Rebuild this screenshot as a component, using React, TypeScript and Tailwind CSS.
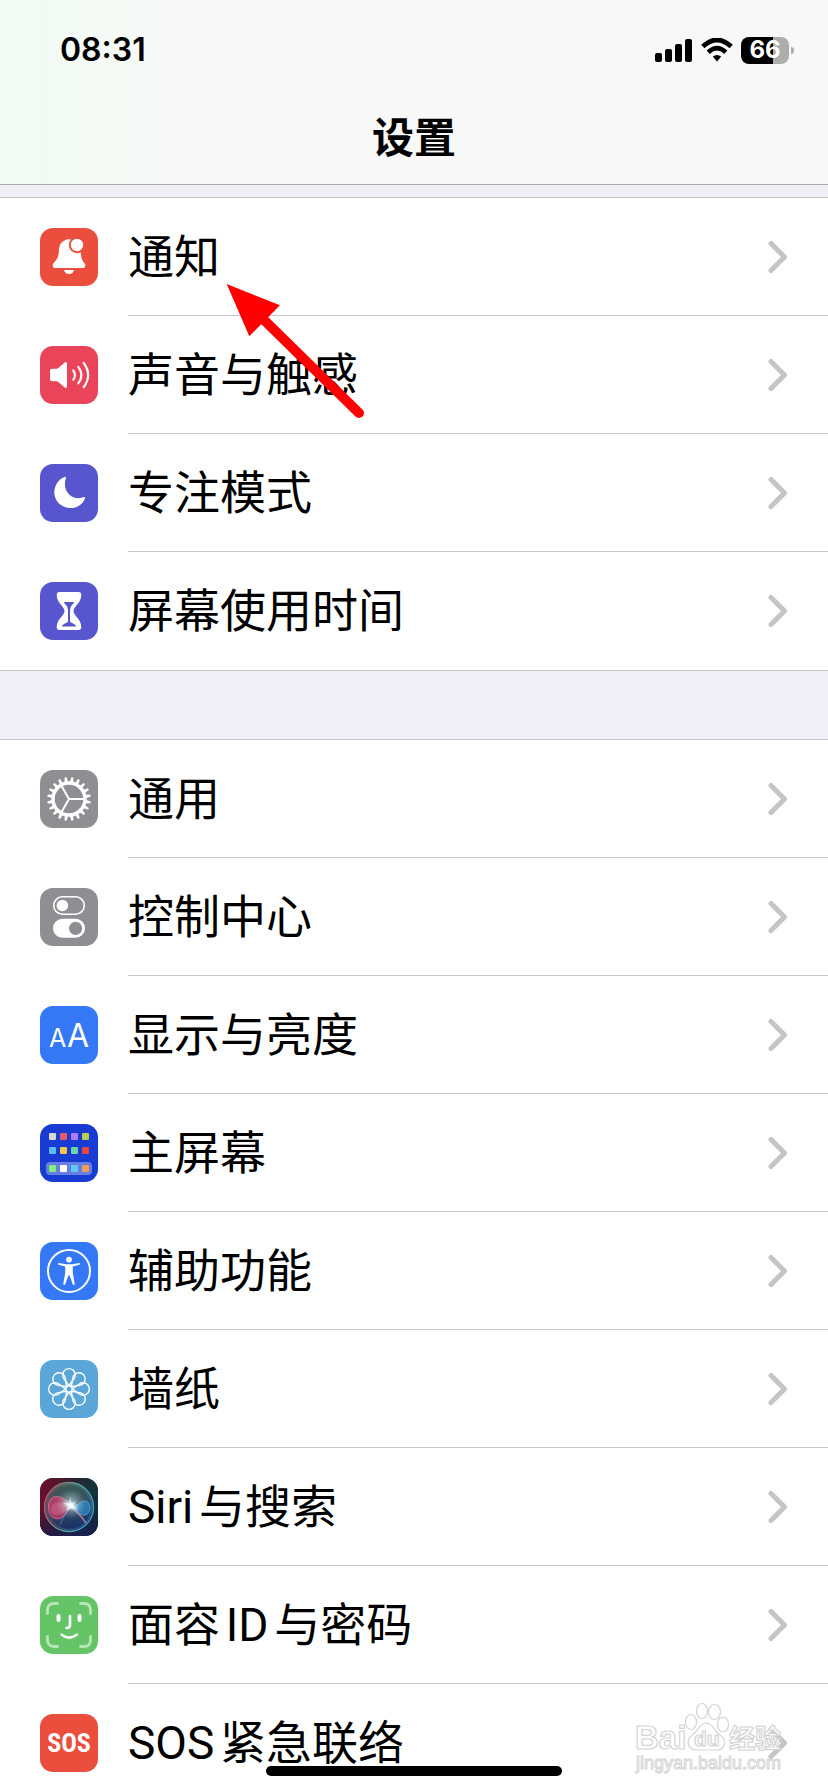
import React from 'react'

const TEETH = Array.from({ length: 20 }, (_, i) => i * 18 + 9)
const PETALS = [0, 45, 90, 135, 180, 225, 270, 315]
const APPS = [
	['#d8d8cc', '#e95a68', '#b079f5', '#b9cc52'],
	['#5cbaf7', '#f7c545', '#6ed3a8', '#e5473c'],
	['#84ee7f', '#ffffff', '#5fc9fb', '#f39d55'],
]

const BellIcon = () => (
	<>
		<path
			d="M12.7 37.5Q12.7 35.5 15 33.5Q18.5 30.5 18.8 24C19 17 21 13.5 25.5 12.2C26.5 10.8 30.5 10.8 31.5 12.2C38 14 40.5 18 40.7 24Q41 30.5 43 33.5Q45.3 35.5 45.3 37.5Q45.3 40 43 40H15Q12.7 40 12.7 37.5Z"
			fill="#fff"
		/>
		<circle cx="37" cy="17" r="8.2" fill="#eb4e3d" />
		<circle cx="37" cy="17" r="6.2" fill="#fff" />
		<path d="M24 42H34Q33 46 29 46Q25 46 24 42Z" fill="#fff" />
	</>
)

const SpeakerIcon = () => (
	<>
		<path
			d="M10 25Q10 22.7 12.2 22.7H16.5Q17.5 22.7 18.3 22L24.5 16.7Q27 15 27 18V40Q27 43 24.5 41.3L18.3 36Q17.5 35.3 16.5 35.3H12.2Q10 35.3 10 33Z"
			fill="#fff"
		/>
		<path
			d="M33.3 24.5Q36.6 29 33.3 33.7M38.3 20.8Q44.6 29 38.3 37.3M43.7 17Q52.6 29 43.7 41.2"
			fill="none"
			stroke="#fff"
			strokeWidth="2.2"
			strokeLinecap="round"
		/>
	</>
)

const MoonIcon = () => (
	<path
		d="M24 13.3Q26.6 12 25.8 14.5C23.5 22 26 28.5 31 32C35 34.6 39.5 34.6 43 33.2Q45.8 32.3 44.9 34.7C42.5 40.5 37 44 30.5 44C21.5 44 14.3 37 14.3 28.5C14.3 21.5 18.5 15.5 24 13.3Z"
		fill="#fff"
	/>
)

const HourglassIcon = () => (
	<>
		<path
			d="M19.5 10H38.5Q41.3 10 41.3 13C41.3 21 33.5 24.5 33.5 29C33.5 33.5 41.3 37 41.3 45Q41.3 48 38.5 48H19.5Q16.7 48 16.7 45C16.7 37 24.5 33.5 24.5 29C24.5 24.5 16.7 21 16.7 13Q16.7 10 19.5 10Z"
			fill="#fff"
		/>
		<path
			d="M24 20H34Q34 21.5 32 23Q30 25 30 28V39Q30 40.5 32 41Q36 42.5 36 44.5H22Q22 42.5 26 41Q28 40.5 28 39V28Q28 25 26 23Q24 21.5 24 20Z"
			fill="#5856ce"
		/>
	</>
)

const GearIcon = () => (
	<>
		<circle cx="29" cy="29" r="16" fill="none" stroke="#fff" strokeWidth="3.4" />
		{TEETH.map(a => (
			<path key={a} d="M27.2 12.5L28 7.2H30L30.8 12.5Z" fill="#fff" transform={`rotate(${a} 29 29)`} />
		))}
		<path d="M29 29H45M29 29L21 15.1M29 29L21 42.9" stroke="#fff" strokeWidth="2" />
	</>
)

const TogglesIcon = () => (
	<>
		<rect x="13.7" y="8.8" width="30.6" height="17.4" rx="8.7" fill="none" stroke="#fff" strokeWidth="1.6" />
		<circle cx="22.4" cy="17.5" r="5.8" fill="#fff" />
		<rect x="13" y="30.8" width="32" height="19" rx="9.5" fill="#fff" />
		<circle cx="35.6" cy="40.3" r="6.6" fill="#8e8e93" />
	</>
)

const TextSizeIcon = () => (
	<g fill="#fff" fontFamily="Inter, sans-serif">
		<text x="9" y="41" fontSize="25">
			A
		</text>
		<text x="27" y="41" fontSize="32">
			A
		</text>
	</g>
)

const HomeScreenIcon = () => (
	<>
		<rect x="6" y="38" width="46" height="13" rx="4" fill="#fff" fillOpacity="0.35" />
		{APPS.map((row, r) =>
			row.map((color, c) => (
				<rect key={color} x={9 + c * 11} y={[9, 23, 41][r]} width="7" height="7" rx="1.2" fill={color} />
			)),
		)}
	</>
)

const AccessibilityIcon = () => (
	<>
		<circle cx="29" cy="29" r="21" fill="none" stroke="#fff" strokeWidth="2" />
		<circle cx="29" cy="17.6" r="2.9" fill="#fff" />
		<path
			d="M18.6 21L26 22.2H32L39.4 21Q40.4 22.2 39.4 22.8L32.8 24.4V31L34.8 42.2Q34 43.6 32.8 42.6L29.6 33.4H28.4L25.2 42.6Q24 43.6 23.2 42.2L25.2 31V24.4L18.6 22.8Q17.6 22 18.6 21Z"
			fill="#fff"
		/>
	</>
)

const FlowerIcon = () => (
	<g fill="none" stroke="#fff" strokeWidth="1.4">
		<circle cx="29" cy="29" r="3.2" />
		{PETALS.map(a => (
			<path key={a} d="M29 25.6L24 18.8A6.3 6.3 0 1 1 34 18.8Z" transform={`rotate(${a} 29 29)`} />
		))}
	</g>
)

const SiriIcon = () => (
	<>
		<defs>
			<linearGradient id="siriBg" x1="0" y1="0.3" x2="1" y2="0.6">
				<stop offset="0" stopColor="#6b1029" />
				<stop offset="0.45" stopColor="#2c1f30" />
				<stop offset="0.8" stopColor="#12343b" />
				<stop offset="1" stopColor="#142a3a" />
			</linearGradient>
			<linearGradient id="siriBase" x1="0" y1="0" x2="0" y2="1">
				<stop offset="0.6" stopColor="#10184c" stopOpacity="0" />
				<stop offset="1" stopColor="#1c1560" stopOpacity="0.6" />
			</linearGradient>
			<linearGradient id="siriOrb" x1="0.3" y1="0" x2="0.6" y2="1">
				<stop offset="0" stopColor="#3a7a66" />
				<stop offset="0.45" stopColor="#44606e" />
				<stop offset="1" stopColor="#14307a" />
			</linearGradient>
			<linearGradient id="siriRing" x1="0" y1="0.3" x2="1" y2="0.6">
				<stop offset="0" stopColor="#c8486f" />
				<stop offset="0.5" stopColor="#5fa58c" />
				<stop offset="1" stopColor="#3b9bd0" />
			</linearGradient>
			<radialGradient id="siriGlow">
				<stop offset="0" stopColor="#fff" />
				<stop offset="0.3" stopColor="#eafcff" stopOpacity="0.8" />
				<stop offset="1" stopColor="#9fe0e0" stopOpacity="0" />
			</radialGradient>
		</defs>
		<rect width="58" height="58" fill="url(#siriBg)" />
		<rect width="58" height="58" fill="url(#siriBase)" />
		<circle cx="29" cy="29" r="24.5" fill="url(#siriOrb)" fillOpacity="0.7" stroke="url(#siriRing)" strokeWidth="1.4" />
		<circle cx="29" cy="29" r="22.5" fill="none" stroke="url(#siriRing)" strokeOpacity="0.4" />
		<path
			d="M31 28C24 17 9 14 8.5 28C8 42 19 43 24 38C28 34 28 31 31 28Z"
			fill="#d43a6c"
			fillOpacity="0.7"
			stroke="#e8709a"
			strokeWidth="0.8"
		/>
		<path d="M31 28C24 24 12 22 11 31C11 39 21 40 31 28Z" fill="#e67a9a" fillOpacity="0.35" />
		<path
			d="M31 28C37 30 40 22 46 23C52 25 51 36 45 37C39 38 37 32 31 28Z"
			fill="#2f86c9"
			fillOpacity="0.75"
			stroke="#4fa8da"
			strokeWidth="0.8"
		/>
		<path d="M31 29Q40 36 46 45" fill="none" stroke="#d98aa8" strokeOpacity="0.7" strokeWidth="1.6" />
		<path d="M31 29Q24 36 20 47" fill="none" stroke="#5a8cd8" strokeOpacity="0.5" strokeWidth="1.2" />
		<circle cx="31" cy="26" r="15" fill="url(#siriGlow)" fillOpacity="0.55" />
		<ellipse cx="31" cy="27.5" rx="9" ry="5.5" fill="url(#siriGlow)" transform="rotate(25 31 27.5)" />
		<path d="M30 19L31.6 25.6L36 23L33 27.6L38 32L32 29.8L26 33L28.6 28L22 24.6L29.4 25.6Z" fill="#fff" fillOpacity="0.6" />
	</>
)

const FaceIcon = () => (
	<g fill="none" strokeLinecap="round">
		<path
			d="M7.5 17.5V14Q7.5 7.5 14 7.5H17.5M40.5 7.5H44Q50.5 7.5 50.5 14V17.5M50.5 40.5V44Q50.5 50.5 44 50.5H40.5M17.5 50.5H14Q7.5 50.5 7.5 44V40.5"
			stroke="#b7e6b8"
			strokeWidth="2.8"
		/>
		<path d="M18.5 20V24M39.5 20V24" stroke="#fff" strokeWidth="4" />
		<path d="M30 20V29Q30 32 26.5 32" stroke="#fff" strokeWidth="2.6" />
		<path d="M21.7 38.7Q29 44.5 36.7 38.7" stroke="#fff" strokeWidth="2.6" />
	</g>
)

const SosIcon = () => (
	<text
		x="29"
		y="38"
		textAnchor="middle"
		fill="#fff"
		fontSize="26"
		fontWeight="700"
		fontFamily="'Roboto Condensed', 'Liberation Sans Narrow', 'Open Sans Condensed', sans-serif"
	>
		SOS
	</text>
)

const groups = [
	[
		{ label: '通知', bg: 'bg-[#eb4e3d]', icon: <BellIcon /> },
		{ label: '声音与触感', bg: 'bg-[#ea445a]', icon: <SpeakerIcon /> },
		{ label: '专注模式', bg: 'bg-[#5856ce]', icon: <MoonIcon /> },
		{ label: '屏幕使用时间', bg: 'bg-[#5856ce]', icon: <HourglassIcon /> },
	],
	[
		{ label: '通用', bg: 'bg-[#8e8e93]', icon: <GearIcon /> },
		{ label: '控制中心', bg: 'bg-[#8e8e93]', icon: <TogglesIcon /> },
		{ label: '显示与亮度', bg: 'bg-[#3478f6]', icon: <TextSizeIcon /> },
		{ label: '主屏幕', bg: 'bg-[#173bd3]', icon: <HomeScreenIcon /> },
		{ label: '辅助功能', bg: 'bg-[#3478f6]', icon: <AccessibilityIcon /> },
		{ label: '墙纸', bg: 'bg-[#5aa6d8]', icon: <FlowerIcon /> },
		{ label: 'Siri与搜索', bg: 'bg-[#12343b]', icon: <SiriIcon /> },
		{ label: '面容ID与密码', bg: 'bg-[#65c466]', icon: <FaceIcon /> },
		{ label: 'SOS紧急联络', bg: 'bg-[#eb4e3d]', icon: <SosIcon /> },
	],
]

const StatusBar = () => (
	<div className="flex items-center justify-between pt-8 pr-[34px] pl-[60px]">
		<div className="text-[32px] leading-9 font-semibold">08:31</div>
		<div className="flex items-center gap-2">
			<svg className="h-6 w-[38px]" viewBox="0 0 38 24">
				<rect x="0" y="15" width="7" height="9" rx="2" />
				<rect x="10" y="11" width="7" height="13" rx="2" />
				<rect x="20" y="6" width="7" height="18" rx="2" />
				<rect x="30" y="1" width="7" height="23" rx="2" />
			</svg>
			<svg className="h-6 w-8" viewBox="0 0 32 24">
				<path d="M1.8 8.6Q16 -4.6 30.2 8.6" fill="none" stroke="#000" strokeWidth="4.8" />
				<path d="M7.2 14.2Q16 6 24.8 14.2" fill="none" stroke="#000" strokeWidth="4.6" />
				<path d="M11.8 18.6Q16 15.2 20.2 18.6L16 23.4Z" />
			</svg>
			<div className="flex items-center gap-0.5">
				<div className="flex h-[27px] w-12 items-center justify-center rounded-lg bg-linear-to-r from-black from-67% to-[#adadad] to-67% text-[24px] leading-none font-bold text-white">
					66
				</div>
				<div className="h-[7px] w-[3px] rounded-r-full bg-[#adadad]"></div>
			</div>
		</div>
	</div>
)

// 红色指示箭头
const Arrow = () => (
	<svg className="pointer-events-none absolute top-[280px] left-[222px] h-[144px] w-[148px]" viewBox="222 280 148 144">
		<path d="M264 320L359 413" stroke="#f00" strokeWidth="10" strokeLinecap="round" />
		<path d="M226.7 284L280 305.3L249.3 336.3Z" fill="#f00" />
	</svg>
)

// 水印
const Watermark = () => (
	<svg
		className="pointer-events-none absolute right-10 bottom-3 h-[80px] w-[156px]"
		viewBox="632 1700 156 80"
		fill="#fff"
		fillOpacity="0.8"
		stroke="#d4d4d4"
		strokeWidth="1.2"
		fontFamily="'Liberation Sans', 'Noto Sans CJK SC', sans-serif"
	>
		<text x="635" y="1749" fontSize="33" fontWeight="700">
			Bai
		</text>
		<ellipse cx="691" cy="1722" rx="5.5" ry="7.5" />
		<ellipse cx="702" cy="1711" rx="5.5" ry="7.5" />
		<ellipse cx="714.5" cy="1712" rx="6" ry="7.5" />
		<ellipse cx="723" cy="1724.5" rx="5.5" ry="7.5" />
		<path d="M706 1723C713 1723 715 1732 720 1735C728 1741 725 1750 716 1750C710 1750 703 1750 697 1750C688 1750 685 1741 692 1735C698 1732 699 1723 706 1723Z" />
		<text x="694" y="1746" fontSize="21" fontWeight="700">
			du
		</text>
		<text x="729" y="1748" fontSize="26" fontWeight="700">
			经验
		</text>
		<text x="636" y="1769" fontSize="18" strokeWidth="1">
			jingyan.baidu.com
		</text>
	</svg>
)

const App = () => {
	return (
		<div className="relative flex h-screen flex-col overflow-hidden bg-[#f1f0f6] font-[Inter,'Noto_Sans_CJK_SC',sans-serif] text-black">
			<header className="shrink-0 border-b border-[#a9a9ac] bg-linear-to-r from-[#f2fbf4] to-[#f8f8f8] to-25%">
				<StatusBar />
				<h1 className="pt-10 pb-4 text-center text-[42px] leading-[60px] font-semibold">设置</h1>
			</header>
			<main className="flex flex-1 flex-col gap-[68px] overflow-y-auto pt-3 [scrollbar-width:none]">
				{groups.map((rows, i) => (
					<ul key={i} className="border-y border-[#c6c6c8] bg-white">
						{rows.map(row => (
							<li key={row.label} className="group">
								<a href="#" className="flex h-[118px] items-center pl-10">
									<svg className={'size-[58px] shrink-0 rounded-[13px] ' + row.bg} viewBox="0 0 58 58">
										{row.icon}
									</svg>
									<div className="ml-[30px] flex h-full flex-1 items-center justify-between border-b border-[#c6c6c8] pr-10 group-last:border-b-0">
										<span className="font-[Roboto,'Noto_Sans_CJK_SC',sans-serif] text-[46px] leading-none [text-autospace:normal]">
											{row.label}
										</span>
										<svg className="h-[34px] w-[22px]" viewBox="0 0 22 34">
											<path
												d="M5 3.5L18.5 17L5 30.5"
												fill="none"
												stroke="#c5c5c7"
												strokeWidth="5"
												strokeLinecap="round"
												strokeLinejoin="round"
											/>
										</svg>
									</div>
								</a>
							</li>
						))}
					</ul>
				))}
			</main>
			<Arrow />
			<Watermark />
			<div className="absolute bottom-4 left-1/2 h-2.5 w-[296px] -translate-x-1/2 rounded-full bg-black"></div>
		</div>
	)
}

export default App
